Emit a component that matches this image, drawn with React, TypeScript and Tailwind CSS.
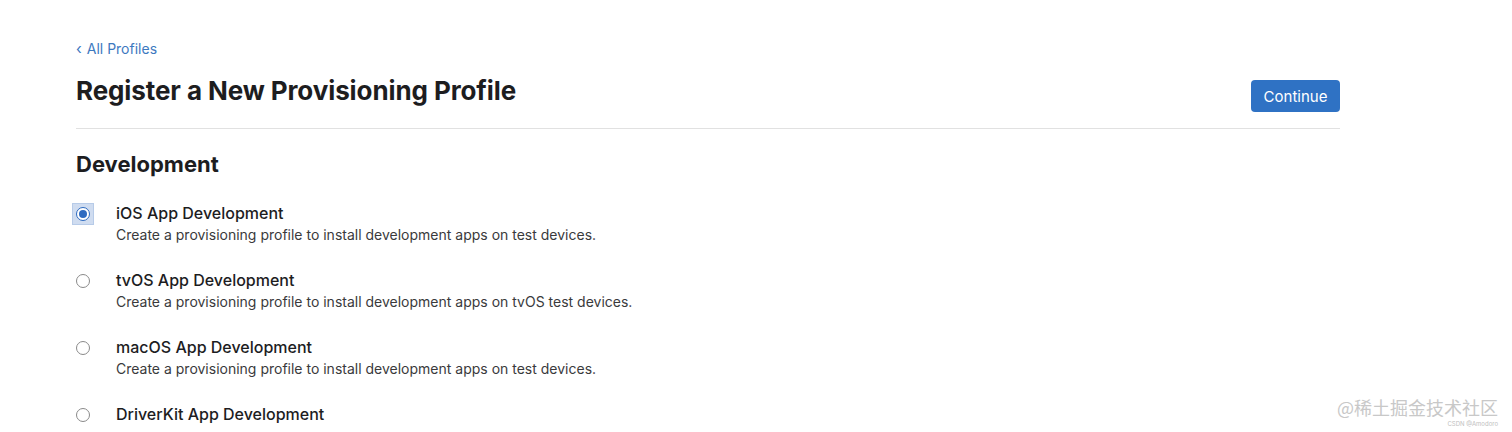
import React from 'react';

interface ProfileOption {
  id: string;
  title: string;
  description?: string;
}

const options: ProfileOption[] = [
  { id: 'ios', title: 'iOS App Development', description: 'Create a provisioning profile to install development apps on test devices.' },
  { id: 'tvos', title: 'tvOS App Development', description: 'Create a provisioning profile to install development apps on tvOS test devices.' },
  { id: 'macos', title: 'macOS App Development', description: 'Create a provisioning profile to install development apps on test devices.' },
  { id: 'driverkit', title: 'DriverKit App Development' },
];

function Radio({ checked }: { checked: boolean }) {
  if (checked) {
    return (
      <div className="w-[22px] h-[22px] flex items-center justify-center bg-[#cfdcf0] border border-[#b7cbe8]">
        <div className="w-[14px] h-[14px] rounded-full border border-[#2d6ac0] bg-white flex items-center justify-center">
          <div className="w-[8px] h-[8px] rounded-full bg-[#2d6ac0]" />
        </div>
      </div>
    );
  }
  return (
    <div className="w-[22px] h-[22px] flex items-center justify-center">
      <div className="w-[14px] h-[14px] rounded-full border border-[#8a8a8a] bg-white" />
    </div>
  );
}

export default function App() {
  const selected = 'ios';

  return (
    <div className="relative w-[1512px] h-[432px] overflow-hidden bg-white font-['Inter',sans-serif] text-[#1d1d1f]">
      <div className="w-[1264px] ml-[76px] pt-[40px]">
        <a className="text-[14px] text-[#3d79bf] flex items-center gap-[5px] leading-[18px]">
          <span className="text-[15px] leading-[18px]">‹</span>
          <span>All Profiles</span>
        </a>

        <div className="flex items-start justify-between mt-[14px] pb-[16px] border-b border-[#e1e1e1]">
          <h1 className="text-[26px] font-bold tracking-[-0.1px] leading-[34px] mt-[2px]">Register a New Provisioning Profile</h1>
          <button className="w-[89px] h-[32px] rounded-[4px] bg-[#2f72c4] text-white text-[15px] leading-none mt-[8px]">Continue</button>
        </div>

        <h2 className="text-[22px] font-bold leading-[28px] mt-[21px]">Development</h2>

        <div className="mt-[24px] flex flex-col gap-[23px]">
          {options.map((o) => (
            <div key={o.id} className="flex items-start">
              <div className="w-[40px] -ml-[4px] pt-[1px]">
                <Radio checked={o.id === selected} />
              </div>
              <div className="flex flex-col pl-[4px]">
                <div className="text-[16px] font-medium leading-[22px]">{o.title}</div>
                {o.description && (
                  <div className="text-[14px] text-[#3a3a3c] leading-[22px]">{o.description}</div>
                )}
              </div>
            </div>
          ))}
        </div>
      </div>

      <div className="absolute right-[14px] bottom-[16px] text-[18px] text-[#c8c8c8] font-['Noto_Sans_CJK_SC',sans-serif] leading-none">@稀土掘金技术社区</div>
      <div className="absolute right-[14px] bottom-[5px] text-[6px] text-[#c0c0c0] leading-none">CSDN @Amodoro</div>
    </div>
  );
}
